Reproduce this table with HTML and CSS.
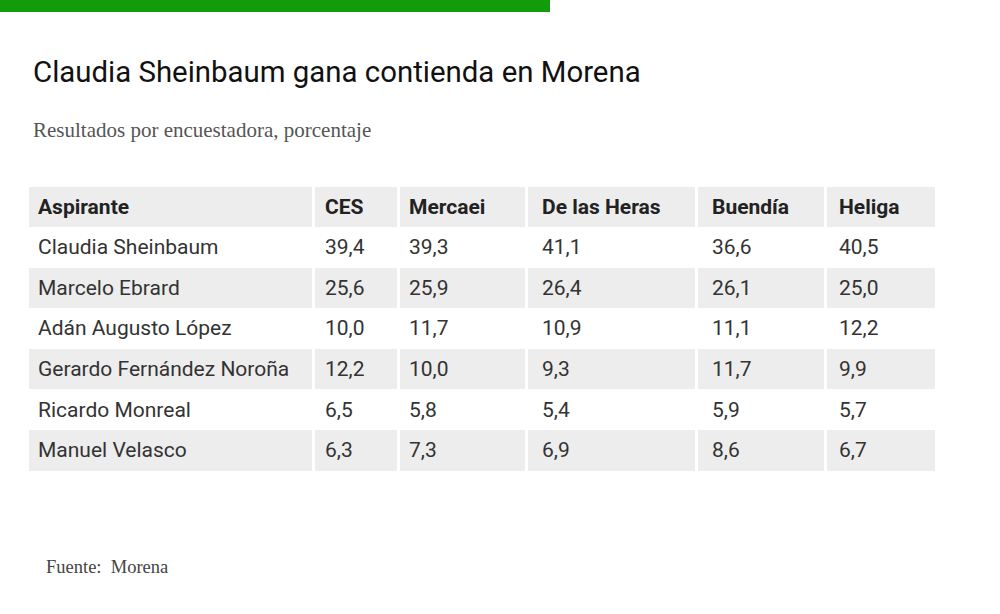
FILE: index.html
```html
<!DOCTYPE html>
<html lang="es">
<head>
<meta charset="utf-8">
<link rel="stylesheet" href="styles.css">
</head>
<body>
<div class="topbar"></div>
<main class="chart">
  <h1 class="title">Claudia Sheinbaum gana contienda en Morena</h1>
  <p class="subtitle">Resultados por encuestadora, porcentaje</p>
  <table class="data">
    <colgroup>
      <col class="c1"><col class="c2"><col class="c3"><col class="c4"><col class="c5"><col class="c6">
    </colgroup>
    <thead>
      <tr><th>Aspirante</th><th>CES</th><th>Mercaei</th><th>De las Heras</th><th>Buendía</th><th>Heliga</th></tr>
    </thead>
    <tbody>
      <tr><td>Claudia Sheinbaum</td><td>39,4</td><td>39,3</td><td>41,1</td><td>36,6</td><td>40,5</td></tr>
      <tr class="alt"><td>Marcelo Ebrard</td><td>25,6</td><td>25,9</td><td>26,4</td><td>26,1</td><td>25,0</td></tr>
      <tr><td>Adán Augusto López</td><td>10,0</td><td>11,7</td><td>10,9</td><td>11,1</td><td>12,2</td></tr>
      <tr class="alt"><td>Gerardo Fernández Noroña</td><td>12,2</td><td>10,0</td><td>9,3</td><td>11,7</td><td>9,9</td></tr>
      <tr><td>Ricardo Monreal</td><td>6,5</td><td>5,8</td><td>5,4</td><td>5,9</td><td>5,7</td></tr>
      <tr class="alt"><td>Manuel Velasco</td><td>6,3</td><td>7,3</td><td>6,9</td><td>8,6</td><td>6,7</td></tr>
    </tbody>
  </table>
  <p class="source">Fuente:&nbsp; Morena</p>
</main>
</body>
</html>
```
FILE: styles.css
```css
html, body {
  margin: 0;
  padding: 0;
  background: #fff;
}
.topbar {
  width: 550px;
  height: 12px;
  background: #129c0c;
}
.chart {
  padding: 0 0 0 26px;
}
.title {
  margin: 0;
  padding: 44px 0 0 7px;
  font-family: Roboto, "Liberation Sans", sans-serif;
  font-weight: 400;
  font-size: 29.4px;
  line-height: 32px;
  color: #111;
}
.subtitle {
  margin: 0;
  padding: 30px 0 0 7px;
  font-family: "Liberation Serif", serif;
  font-size: 21px;
  line-height: 24px;
  color: #555;
}
.data {
  margin-top: 45px;
  border-collapse: separate;
  border-spacing: 3px 0;
  table-layout: fixed;
  width: 912px;
  font-family: Roboto, "Liberation Sans", sans-serif;
  font-size: 21px;
  color: #333;
}
.c1 { width: 283px; }
.c2 { width: 82px; }
.c3 { width: 125px; }
.c4 { width: 167px; }
.c5 { width: 126px; }
.c6 { width: 108px; }
.data th, .data td {
  text-align: left;
  padding: 0 0 0 9px;
  height: 40.6px;
  white-space: nowrap;
}
.data th:nth-child(2), .data td:nth-child(2) { padding-left: 10px; }
.data th:nth-child(4), .data td:nth-child(4) { padding-left: 14px; }
.data th:nth-child(5), .data td:nth-child(5) { padding-left: 14px; }
.data th:nth-child(6), .data td:nth-child(6) { padding-left: 12px; }
.data th {
  font-weight: 700;
  color: #222;
  background: #ededed;
  height: 40px;
}
.data tr.alt td {
  background: #ededed;
}
.source {
  margin: 0;
  padding: 85px 0 0 20px;
  font-family: "Liberation Serif", serif;
  font-size: 18.5px;
  line-height: 22px;
  color: #444;
}
```
